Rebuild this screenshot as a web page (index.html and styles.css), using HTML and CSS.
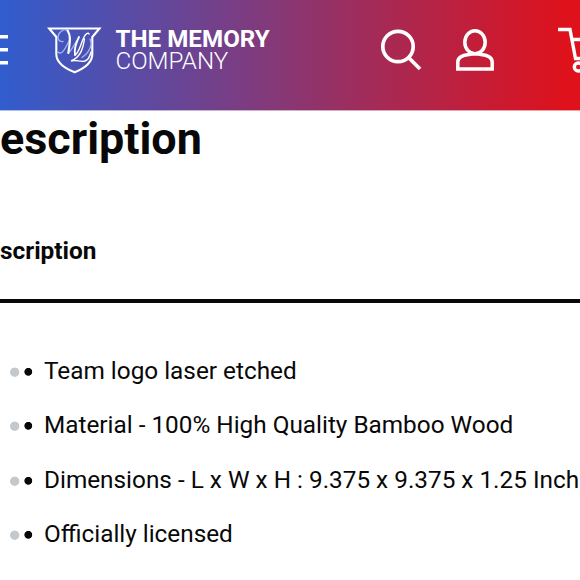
FILE: index.html
```html
<!DOCTYPE html>
<html lang="en">
<head>
  <meta charset="UTF-8" />
  <meta name="viewport" content="width=device-width, initial-scale=1.0" />
  <title>The Memory Company</title>
  <link rel="stylesheet" href="styles.css">
</head>
<body>
  <header class="header">
    <svg class="menu" width="8" height="32" viewBox="0 0 8 32" fill="none" stroke="#fff" stroke-width="3.4">
      <path d="M0 2.7h8M0 15.7h8M0 28.7h8" />
    </svg>

    <a class="brand">
      <svg class="shield" width="58" height="50" viewBox="0 0 58 50" fill="none" stroke="#fff" stroke-linecap="round">
        <path d="M3.2 3.5H53.5L46.3 12V29C46.3 38 38 43.5 28.7 47.3C19 43.5 10.3 38 10.3 29V12Z" stroke-width="2.1" stroke-linecap="butt" />
        <g stroke="#a5b5f2" stroke-width="1.3">
          <path d="M17 16.5C12 17 10.5 12 13.5 8C16 5 20 3.5 22.5 6" />
          <path d="M12 27C16 31 20 22 24 14M22.5 28C26 25 29 18 33 12" />
          <path d="M44 14C47 20 43 28 36 32.5" />
        </g>
        <path d="M21.5 5.5C25.5 11 23.5 20 22.3 28" stroke-width="2.1" />
        <path d="M33 12C30 18 28 24 29 30" stroke-width="1.8" />
        <path d="M29 30C33 28 35 18 38 12C39.5 9 42 7 43 9M38.5 14C37 23 35 32 25 36C30 34 34 37.5 39 36C42 35 44 31 45 27" stroke-width="1.4" />
      </svg>
      <span class="brand-name">
        <strong>THE MEMORY</strong>
        <span>COMPANY</span>
      </span>
    </a>

    <svg class="search" width="42" height="42" viewBox="0 0 42 42" fill="none" stroke="#fff" stroke-width="3.7">
      <circle cx="18" cy="17.5" r="15.2" />
      <path d="M28.5 28.5L40 40" />
    </svg>
    <svg class="account" width="38" height="42" viewBox="0 0 38 42" fill="none" stroke="#fff" stroke-width="3.5">
      <ellipse cx="19" cy="13.3" rx="10.2" ry="11.5" />
      <path d="M13 25.5C6 26.3 1.8 28.5 1.8 33V39.9H36.2V33C36.2 28.5 32 26.3 25 25.5C22 24.7 16 24.7 13 25.5Z" />
    </svg>
    <svg class="cart" width="22" height="46" viewBox="0 0 22 46" fill="none" stroke="#fff" stroke-width="3.4">
      <path d="M0 2.5H12L17.5 31.5H22M14 12.5H22" />
      <circle cx="20.3" cy="40" r="4" />
    </svg>
  </header>

  <main class="content">
    <h1>escription</h1>
    <h2>scription</h2>
    <ul class="details">
      <li>Team logo laser etched</li>
      <li>Material - 100% High Quality Bamboo Wood</li>
      <li>Dimensions - L x W x H : 9.375 x 9.375 x 1.25 Inch</li>
      <li>Officially licensed</li>
    </ul>
  </main>
</body>
</html>
```
FILE: styles.css
```css
html, body {
  height: 100%;
  margin: 0;
  background: #fff;
  color: #080808;
  font-family: Roboto, sans-serif;
  overflow: hidden;
}
.header {
  display: flex;
  align-items: flex-start;
  box-sizing: border-box;
  height: 111px;
  width: 580px;
  border-bottom: 1px solid rgba(255, 255, 255, 0.6);
  background: linear-gradient(90deg, #315dce 0%, #df111b 98%, #df111b 100%);
}
.header svg {
  flex: none;
}
.menu {
  margin-top: 34px;
}
.brand {
  display: flex;
  width: 226px;
  margin: 25px 0 0 38px;
}
.brand-name {
  display: flex;
  flex-direction: column;
  margin: 4px 0 0 11.5px;
  color: #fff;
  font-size: 24.2px;
  line-height: 21.5px;
  white-space: nowrap;
}
.brand-name strong {
  font-weight: 700;
}
.brand-name span {
  font-weight: 300;
}
.search {
  margin: 29px 0 0 108px;
}
.account {
  margin: 29px 0 0 34px;
}
.cart {
  margin: 27px 0 0 64px;
}
h1 {
  margin: 2px 0 0 0;
  font-size: 44.9px;
  line-height: 52px;
  font-weight: 700;
}
h2 {
  box-sizing: border-box;
  height: 138px;
  margin: 0;
  padding-top: 70px;
  border-bottom: 4px solid #080808;
  font-size: 24.4px;
  line-height: 32px;
  font-weight: 700;
}
.details {
  margin: 41px 0 0;
  padding: 0;
  list-style: none;
  font-size: 24.33px;
  line-height: 54.4px;
  white-space: nowrap;
}
.details li {
  display: flex;
  align-items: center;
}
.details li::before {
  content: "";
  flex: none;
  width: 24px;
  height: 10px;
  margin: 1px 10px 0 10px;
  background:
    radial-gradient(circle at 4.7px 5.2px, #c3c8cc 4.2px, transparent 5px),
    radial-gradient(circle at 18.3px 4.8px, #080808 3.5px, transparent 4.3px);
}
```
